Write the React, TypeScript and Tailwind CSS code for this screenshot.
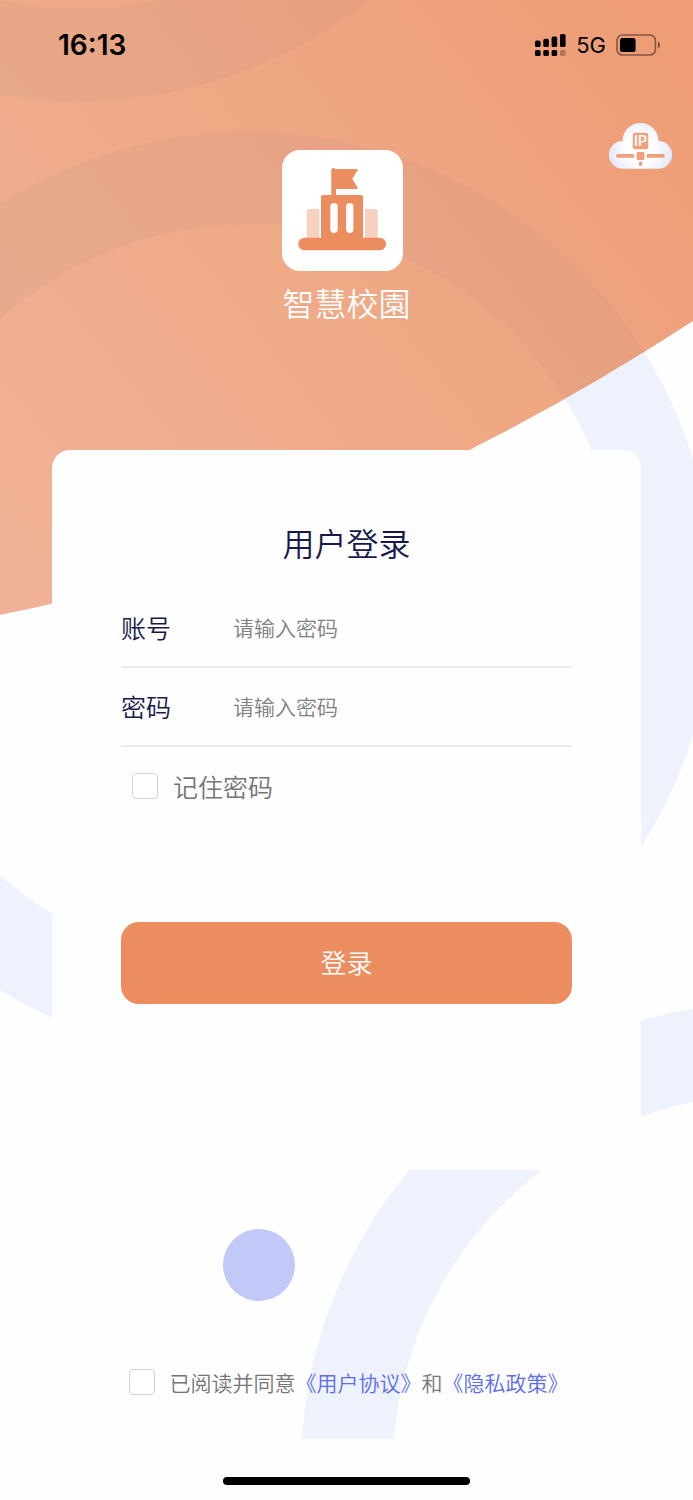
import { useState, type ReactNode } from 'react';

const FONT = "font-['Noto_Sans_CJK_SC',sans-serif]";

/** Decorative page background: orange wave, pale rings and the lilac dot. */
function Backdrop() {
  const rings = (
    <g fill="none" strokeWidth="92">
      <circle cx="80" cy="-364" r="419" />
      <circle cx="249" cy="597" r="419" />
      <circle cx="767" cy="1469" r="420" />
    </g>
  );
  return (
    <svg viewBox="0 0 693 1439" className="absolute inset-x-0 top-0 w-full" aria-hidden="true">
      <defs>
        <linearGradient id="wave" gradientUnits="userSpaceOnUse" x1="20" y1="540" x2="670" y2="20">
          <stop offset="0" stopColor="#f1b196" />
          <stop offset="0.5" stopColor="#efa985" />
          <stop offset="0.7" stopColor="#efa380" />
          <stop offset="1" stopColor="#ee9d74" />
        </linearGradient>
        <clipPath id="wave-clip">
          <path d="M0 0H693V321Q350 544 0 615Z" />
        </clipPath>
      </defs>
      <g stroke="#edf2fd">{rings}</g>
      <circle cx="259" cy="1265" r="36" fill="#c2c8f7" />
      <g clipPath="url(#wave-clip)">
        <rect width="693" height="620" fill="url(#wave)" />
        <g stroke="#a08080" strokeOpacity="0.09">{rings}</g>
      </g>
    </svg>
  );
}

function StatusBar() {
  return (
    <div className="flex h-[90px] items-center justify-between pl-[58px] pr-8 font-[Inter,sans-serif] text-black">
      <span className="text-[28px] font-semibold">16:13</span>
      <div className="flex items-center gap-[10px]">
        <svg width="31" height="22" viewBox="0 0 31 22" aria-hidden="true">
          <rect x="0" y="6.6" width="5.6" height="6.4" rx="1.6" />
          <rect x="8.3" y="4.8" width="5.6" height="8.2" rx="1.6" />
          <rect x="16.6" y="2.6" width="5.6" height="10.4" rx="1.6" />
          <rect x="25" y="0" width="5.6" height="13" rx="1.6" />
          <rect x="0" y="16" width="5.6" height="6" rx="1.6" />
          <rect x="8.3" y="16" width="5.6" height="6" rx="1.6" />
          <rect x="16.6" y="16" width="5.6" height="6" rx="1.6" />
          <rect x="25" y="16" width="5.6" height="6" rx="1.6" opacity="0.25" />
        </svg>
        <span className="text-[22px] font-normal">5G</span>
        <svg width="45" height="22" viewBox="0 0 45 22" aria-hidden="true">
          <rect x="1" y="1" width="38.4" height="20" rx="5.5" fill="none" stroke="#000" strokeOpacity="0.45" strokeWidth="1.6" />
          <rect x="4" y="4" width="15.6" height="14" rx="2.6" />
          <path d="M42 7.6a4 4 0 0 1 0 6.8Z" opacity="0.55" />
        </svg>
      </div>
    </div>
  );
}

function SchoolLogo() {
  return (
    <div className="rounded-[18px] bg-white">
      <svg width="121" height="121" viewBox="0 0 121 121" aria-hidden="true">
        <g fill="#f7d1c0">
          <path d="M37.3 59H27a2.3 2.3 0 0 0-2.3 2.3V88h12.6Z" />
          <path d="M83 59h10.4a2.3 2.3 0 0 1 2.3 2.3V88H83Z" />
        </g>
        <g fill="#eb8d5e">
          <path d="M49.3 20a2.2 2.2 0 0 1 4-1H75a.8.8 0 0 1 .6 1.3L70.3 29l5.3 8.4a1 1 0 0 1-.7 1.5H54V46h-4.7Z" />
          <rect x="39" y="45" width="42" height="46" rx="2.2" />
          <rect x="16.3" y="87.7" width="87.7" height="12.6" rx="6.3" />
        </g>
        <rect x="48.3" y="53" width="7.4" height="30" rx="3.7" fill="#fff" />
        <rect x="64" y="53" width="7.4" height="30" rx="3.7" fill="#fff" />
      </svg>
    </div>
  );
}

function CloudIcon() {
  return (
    <svg width="63" height="47" viewBox="0 0 63 47" aria-hidden="true">
      <defs>
        <radialGradient id="cloud" gradientUnits="userSpaceOnUse" cx="31.5" cy="27" r="32">
          <stop offset="0.45" stopColor="#fff" />
          <stop offset="1" stopColor="#e3e7fc" />
        </radialGradient>
      </defs>
      <path
        d="M13.8 46.7A13.8 13.8 0 0 1 13.5 19a18 18 0 0 1 36 0A13.8 13.8 0 0 1 49.2 46.7Z"
        fill="url(#cloud)"
      />
      <g fill="#eea17b">
        <rect x="23.7" y="10.7" width="15.6" height="16.6" rx="2.4" />
        <rect x="7.3" y="32" width="17.8" height="3.7" rx="1.2" />
        <rect x="37.7" y="32" width="18" height="3.7" rx="1.2" />
        <rect x="27.6" y="30" width="7.8" height="8" rx="1.2" />
        <rect x="29.8" y="39.2" width="3.4" height="4.8" rx="1.7" />
      </g>
      <text x="31.5" y="24" textAnchor="middle" fontSize="14" fill="#fff" className="font-[Roboto,sans-serif] font-medium">
        IP
      </text>
    </svg>
  );
}

function Field({ id, label, type }: { id: string; label: string; type: string }) {
  return (
    <div className="flex h-[79px] items-center border-b-2 border-[#ececec]">
      <label htmlFor={id} className="w-28 shrink-0 text-[25px] text-[#17194a]">
        {label}
      </label>
      <input
        id={id}
        type={type}
        placeholder="请输入密码"
        className="min-w-0 flex-1 bg-transparent text-[21px] text-[#17194a] outline-none placeholder:text-[#808080]"
      />
    </div>
  );
}

function Tick({ id, children }: { id: string; children: ReactNode }) {
  const [on, setOn] = useState(false);
  return (
    <div className="flex items-center gap-[15px] text-[#757575]">
      <input
        id={id}
        type="checkbox"
        checked={on}
        onChange={(e) => setOn(e.target.checked)}
        className="size-[26px] shrink-0 appearance-none rounded-[4px] border border-[#d2d2d2] bg-white checked:bg-[#eb8d5e]"
      />
      <label htmlFor={id}>{children}</label>
    </div>
  );
}

export default function App() {
  return (
    <div className={`relative flex min-h-screen flex-col overflow-hidden bg-[#fefefe] font-[350] ${FONT}`}>
      <Backdrop />
      <div className="relative flex flex-1 flex-col">
        <StatusBar />

        {/* brand + server settings */}
        <header className="grid grid-cols-[1fr_auto_1fr] items-start pt-8">
          <div className="col-start-2 flex flex-col items-start gap-2 pt-7">
            <SchoolLogo />
            <h1 className="text-[32px] leading-[46px] text-white">智慧校園</h1>
          </div>
          <button type="button" aria-label="IP" className="mr-[21px] justify-self-end">
            <CloudIcon />
          </button>
        </header>

        <main className="mx-[52px] mt-[125px] rounded-[18px] bg-[#fefefe] px-[69px] pb-[166px] pt-[69px]">
          <h2 className="text-center text-[32px] leading-[46px] text-[#17194a]">用户登录</h2>
          <form className="mt-6" onSubmit={(e) => e.preventDefault()}>
            <Field id="account" label="账号" type="text" />
            <Field id="password" label="密码" type="password" />
            <div className="mt-5 pl-[11px] text-[25px] leading-[38px]">
              <Tick id="remember">记住密码</Tick>
            </div>
            <button type="submit" className="mt-[117px] h-[82px] w-full rounded-[18px] bg-[#eb8d5e] pb-1 text-[26px] text-white">
              登录
            </button>
          </form>
        </main>

        <footer className="mt-auto flex flex-col items-center pb-[15px]">
          <div className="pl-1 text-[21px] leading-8">
            <Tick id="agree">
              已阅读并同意
              <a href="#terms" className="text-[#5b6cf0]">《用户协议》</a>
              和
              <a href="#privacy" className="text-[#5b6cf0]">《隐私政策》</a>
            </Tick>
          </div>
          <div className="mt-[79px] h-2 w-[247px] rounded-full bg-black" />
        </footer>
      </div>
    </div>
  );
}
